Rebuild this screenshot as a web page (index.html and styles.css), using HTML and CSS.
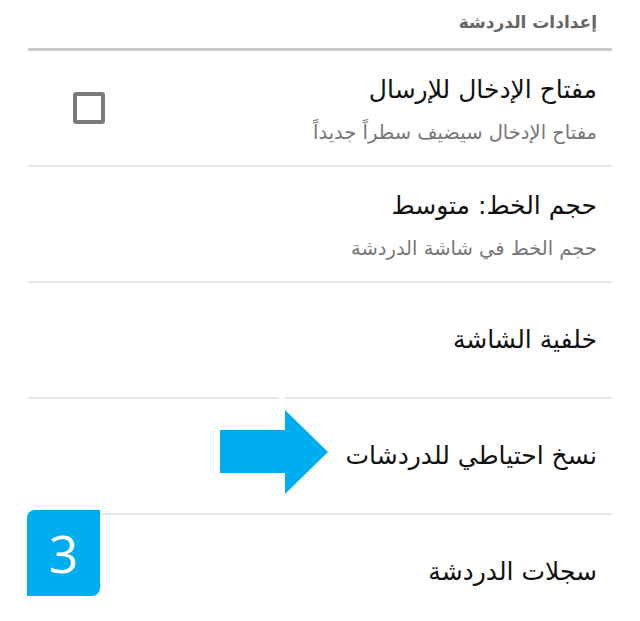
FILE: index.html
```html
<!DOCTYPE html>
<html lang="ar" dir="rtl">
<head>
<meta charset="utf-8">
<title>إعدادات الدردشة</title>
<link rel="stylesheet" href="styles.css">
</head>
<body>
<div class="page">
  <div class="list">
    <div class="header"><span>إعدادات الدردشة</span></div>
    <div class="row">
      <div class="text text-two">
        <div class="title">مفتاح الإدخال للإرسال</div>
        <div class="sub">مفتاح الإدخال سيضيف سطراً جديداً</div>
      </div>
      <div class="checkbox"></div>
    </div>
    <div class="row">
      <div class="text text-two">
        <div class="title">حجم الخط: متوسط</div>
        <div class="sub">حجم الخط في شاشة الدردشة</div>
      </div>
    </div>
    <div class="row">
      <div class="text">
        <div class="title">خلفية الشاشة</div>
      </div>
    </div>
    <div class="row">
      <div class="text">
        <div class="title">نسخ احتياطي للدردشات</div>
      </div>
    </div>
    <div class="row">
      <div class="text">
        <div class="title">سجلات الدردشة</div>
      </div>
    </div>
  </div>
  <svg class="arrow" width="112" height="98" viewBox="0 0 112 98">
    <rect x="59" y="0" width="6" height="4" fill="#ffffff"/>
    <polygon points="0,34 65,34 65,14 108,56 65,98 65,77 0,77" fill="#00aeef"/>
  </svg>
  <div class="badge">3</div>
</div>
</body>
</html>
```
FILE: styles.css
```css
html, body {
  margin: 0;
  padding: 0;
  background: #ffffff;
}
body {
  font-family: "DejaVu Sans", sans-serif;
}
.page {
  position: relative;
  width: 640px;
  height: 621px;
  overflow: hidden;
}
.list {
  margin: 0 28px;
}
.header {
  height: 44px;
  padding: 0 15px 4px 15px;
  border-bottom: 3px solid #cbcbcb;
  display: flex;
  align-items: center;
  font-size: 17px;
  font-weight: bold;
  color: #666666;
}
.row {
  height: 114px;
  border-bottom: 2px solid #e6e6e6;
  display: flex;
  align-items: center;
  padding: 0 15px;
}
.text {
  flex: 1;
  display: flex;
  flex-direction: column;
}
.text-two {
  padding-top: 4px;
}
.title {
  font-size: 25px;
  line-height: 30px;
  color: #111111;
}
.sub {
  font-size: 19.5px;
  line-height: 26px;
  color: #777777;
  margin-top: 15px;
}
.checkbox {
  width: 24px;
  height: 24px;
  border: 4px solid #7a7a7a;
  border-radius: 3px;
  margin-left: 30px;
}
.arrow {
  position: absolute;
  left: 220px;
  top: 396px;
}
.badge {
  position: absolute;
  left: 27px;
  top: 510px;
  width: 73px;
  height: 86px;
  background: #00aeef;
  border-radius: 8px 0 8px 0;
  color: #ffffff;
  font-family: "Open Sans", sans-serif;
  font-weight: 400;
  font-size: 52px;
  line-height: 86px;
  text-align: center;
}
```
